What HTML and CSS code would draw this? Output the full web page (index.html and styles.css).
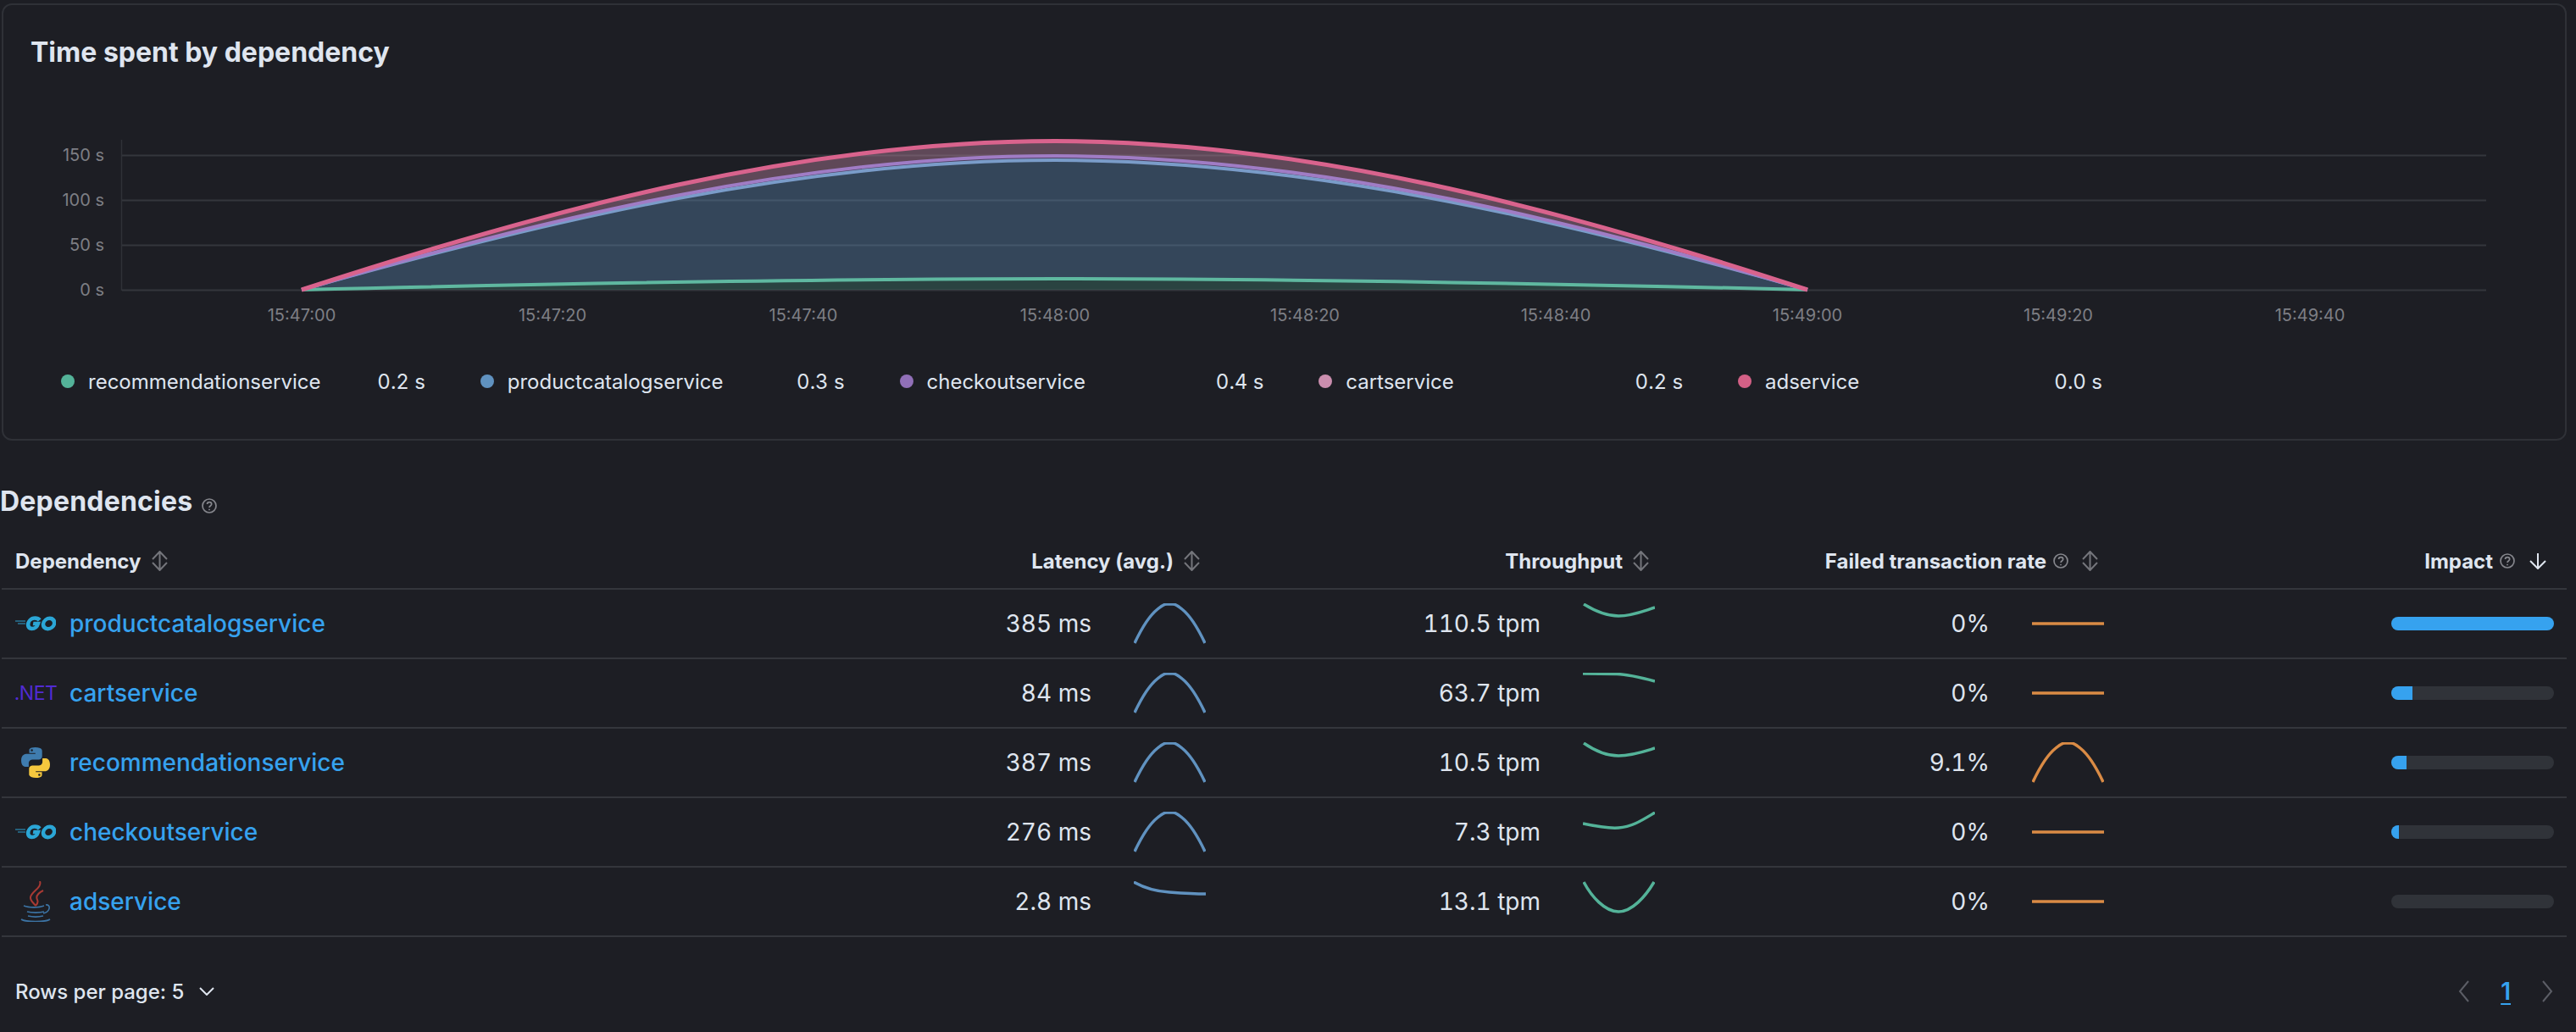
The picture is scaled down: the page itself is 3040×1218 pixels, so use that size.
FILE: index.html
```html
<!DOCTYPE html>
<html lang="en">
<head>
    <meta charset="UTF-8">
    <title>Dependencies</title>
    <link rel="stylesheet" href="styles.css">
</head>
<body>
    <svg class="defs" aria-hidden="true">
        <symbol id="sort" viewBox="0 0 19 24"><path d="M1 10 9.500 1 18 10M1 14l8.500 9 8.500-9M9.500 1v22"/></symbol>
        <symbol id="help" viewBox="0 0 18 18"><circle cx="9" cy="9" r="8"/><path d="M6.500 7c0-3.200 5.200-3.200 5.200 0 0 2-2.700 1.900-2.700 4"/><path d="M9 12.800v1.400"/></symbol>
        <symbol id="go" viewBox="0 0 48 18"><path class="go-thin" d="M0 6h12M3 9h9"/><g transform="translate(2.500 0) skewX(-9)"><path class="go-bold" d="M27 5C24 1.800 18 1.600 15.500 5c-2.700 3.700-1.200 10 4 10 3.500 0 6-2.300 6.500-6h-6"/><ellipse class="go-bold" cx="38.500" cy="9" rx="6.500" ry="6.200"/></g></symbol>
        <symbol id="arch" viewBox="0 0 85 48"><path d="M1 47C9 30 18 15 28 7 32 3.500 35 1 39 1h7C50 1 53 3.500 57 7 67 15 76 30 84 47"/></symbol>
    </svg>

    <div class="page">
        <section class="panel">
            <h3 class="panel-title">Time spent by dependency</h3>
            <svg class="chart" viewBox="4 150 3023 240" width="3023" height="240">
                <path class="axis" d="M143.500 165v178"/>
                <path class="grid" d="M144 183.500h2790M144 236.500h2790M144 289.500h2790M144 342.500h2790"/>
                <path class="band band-ad" d="M356 342C652.300 245.500 948.700 166.500 1245 166.500S1837.700 245.500 2133 342C1837.700 255.100 1541.300 184 1245 184S652.300 255.100 356 342Z"/>
                <path class="band band-checkout" d="M356 342C652.300 255.100 948.700 184 1245 184S1837.700 255.100 2133 342C1837.700 257.800 1541.300 189 1245 189S652.300 257.800 356 342Z"/>
                <path class="band band-product" d="M356 342C652.300 257.800 948.700 189 1245 189S1837.700 257.800 2133 342C1837.700 334.800 1541.300 329 1245 329S652.300 334.800 356 342Z"/>
                <path class="band band-rec" d="M356 342C652.300 334.800 948.700 329 1245 329S1837.700 334.800 2133 342Z"/>
                <path class="line line-rec" d="M356 342C652.300 334.800 948.700 329 1245 329S1837.700 334.800 2133 342"/>
                <path class="line line-product" d="M356 342C652.300 257.800 948.700 189 1245 189S1837.700 257.800 2133 342"/>
                <path class="line line-checkout" d="M356 342C652.300 255.100 948.700 184 1245 184S1837.700 255.100 2133 342"/>
                <path class="line line-ad" d="M356 342C652.300 245.500 948.700 166.500 1245 166.500S1837.700 245.500 2133 342"/>
                <g class="y-labels">
                    <text x="123" y="182.500">150 s</text>
                    <text x="123" y="235.500">100 s</text>
                    <text x="123" y="288.500">50 s</text>
                    <text x="123" y="341.500">0 s</text>
                </g>
                <g class="x-labels">
                    <text x="356" y="372">15:47:00</text>
                    <text x="652" y="372">15:47:20</text>
                    <text x="948" y="372">15:47:40</text>
                    <text x="1245" y="372">15:48:00</text>
                    <text x="1540" y="372">15:48:20</text>
                    <text x="1836" y="372">15:48:40</text>
                    <text x="2133" y="372">15:49:00</text>
                    <text x="2429" y="372">15:49:20</text>
                    <text x="2726" y="372">15:49:40</text>
                </g>
            </svg>
            <div class="legend">
                <div class="legend-item"><span class="dot dot-rec"></span><span class="legend-name">recommendationservice</span><span class="legend-value">0.2 s</span></div>
                <div class="legend-item"><span class="dot dot-product"></span><span class="legend-name">productcatalogservice</span><span class="legend-value">0.3 s</span></div>
                <div class="legend-item"><span class="dot dot-checkout"></span><span class="legend-name">checkoutservice</span><span class="legend-value">0.4 s</span></div>
                <div class="legend-item"><span class="dot dot-cart"></span><span class="legend-name">cartservice</span><span class="legend-value">0.2 s</span></div>
                <div class="legend-item"><span class="dot dot-ad"></span><span class="legend-name">adservice</span><span class="legend-value">0.0 s</span></div>
            </div>
        </section>

        <h3 class="section-title">Dependencies <svg class="icon-help"><use href="#help"/></svg></h3>

        <table class="deps">
            <colgroup><col><col class="col-num"><col class="col-num"><col class="col-num"><col class="col-num"></colgroup>
            <thead>
                <tr>
                    <th class="th-name"><div class="th-inner">Dependency <svg class="icon-sort"><use href="#sort"/></svg></div></th>
                    <th><div class="th-inner">Latency (avg.) <svg class="icon-sort"><use href="#sort"/></svg></div></th>
                    <th><div class="th-inner">Throughput <svg class="icon-sort"><use href="#sort"/></svg></div></th>
                    <th><div class="th-inner">Failed transaction rate <svg class="icon-help"><use href="#help"/></svg> <svg class="icon-sort"><use href="#sort"/></svg></div></th>
                    <th><div class="th-inner">Impact <svg class="icon-help"><use href="#help"/></svg> <svg class="icon-arrow" viewBox="0 0 22 20"><path d="M11 1v18M2 10l9 9 9-9"/></svg></div></th>
                </tr>
            </thead>
            <tbody>
                <tr>
                    <td><div class="name-cell"><span class="logo"><svg class="logo-go"><use href="#go"/></svg></span><a class="link">productcatalogservice</a></div></td>
                    <td><div class="num-cell">385 ms <svg class="spark spark-blue"><use href="#arch"/></svg></div></td>
                    <td><div class="num-cell">110.5 tpm <svg class="spark spark-green" viewBox="0 0 85 48"><path d="M1 1C14 9 28 15 42 15 58 15 72 9 85 5"/></svg></div></td>
                    <td><div class="num-cell">0% <svg class="spark spark-orange" viewBox="0 0 85 48"><path d="M0 24h85"/></svg></div></td>
                    <td><div class="impact"><div class="impact-fill fill-100"></div></div></td>
                </tr>
                <tr>
                    <td><div class="name-cell"><span class="logo logo-net">.NET</span><a class="link">cartservice</a></div></td>
                    <td><div class="num-cell">84 ms <svg class="spark spark-blue"><use href="#arch"/></svg></div></td>
                    <td><div class="num-cell">63.7 tpm <svg class="spark spark-green" viewBox="0 0 85 48"><path d="M0 1l40 .5C55 2 70 6 85 10"/></svg></div></td>
                    <td><div class="num-cell">0% <svg class="spark spark-orange" viewBox="0 0 85 48"><path d="M0 24h85"/></svg></div></td>
                    <td><div class="impact"><div class="impact-fill fill-2"></div></div></td>
                </tr>
                <tr>
                    <td><div class="name-cell"><span class="logo">
                        <svg class="logo-py" viewBox="0 0 36 36">
                            <path class="py-blue" d="M17.600 0C10 0 10.500 3.300 10.500 3.300v3.400h7.300v1H7.600S1 7.200 1 15.500 6.700 23 6.700 23h3.200v-3.900s-.1-4.500 4.400-4.500h7.200s4.200 0 4.200-4V4.200S26.200 0 17.600 0ZM13.600 2.200a1.300 1.300 0 1 1 0 2.600 1.300 1.300 0 0 1 0-2.600Z"/>
                            <path class="py-yellow" d="M18.400 36c7.600 0 7.100-3.300 7.100-3.300v-3.400h-7.300v-1h10.200S35 28.800 35 20.500 29.300 13 29.300 13h-3.200v3.900s.1 4.500-4.400 4.500h-7.200s-4.200 0-4.200 4v6.400S9.800 36 18.400 36ZM22.400 33.800a1.300 1.300 0 1 1 0-2.600 1.300 1.300 0 0 1 0 2.600Z"/>
                        </svg></span><a class="link">recommendationservice</a></div></td>
                    <td><div class="num-cell">387 ms <svg class="spark spark-blue"><use href="#arch"/></svg></div></td>
                    <td><div class="num-cell">10.5 tpm <svg class="spark spark-green" viewBox="0 0 85 48"><path d="M1 1C14 10 28 16 42 16 58 16 72 11 85 7"/></svg></div></td>
                    <td><div class="num-cell">9.1% <svg class="spark spark-orange"><use href="#arch"/></svg></div></td>
                    <td><div class="impact"><div class="impact-fill fill-3"></div></div></td>
                </tr>
                <tr>
                    <td><div class="name-cell"><span class="logo"><svg class="logo-go"><use href="#go"/></svg></span><a class="link">checkoutservice</a></div></td>
                    <td><div class="num-cell">276 ms <svg class="spark spark-blue"><use href="#arch"/></svg></div></td>
                    <td><div class="num-cell">7.3 tpm <svg class="spark spark-green" viewBox="0 0 85 48"><path d="M0 14C14 17 28 20 42 19 58 18 70 10 85 1"/></svg></div></td>
                    <td><div class="num-cell">0% <svg class="spark spark-orange" viewBox="0 0 85 48"><path d="M0 24h85"/></svg></div></td>
                    <td><div class="impact"><div class="impact-fill fill-4"></div></div></td>
                </tr>
                <tr>
                    <td><div class="name-cell"><span class="logo">
                        <svg class="logo-java" viewBox="0 0 36 48">
                            <path class="java-flame" d="M23 0C26 8 13 12 12 19c-.5 4 4 7 6 10M27 11c-6 3-9 7-7 11 1 2 0 5-2 7"/>
                            <path class="java-cup" d="M4 29c6 2.500 18 2.500 24 0M8 36c5 1.500 15 1.500 20 0M9 41c5 1.200 13 1.200 18 0M1 45c5 3.500 29 3.500 34 0M30 28c6-1 6 8-3 10"/>
                        </svg></span><a class="link">adservice</a></div></td>
                    <td><div class="num-cell">2.8 ms <svg class="spark spark-blue" viewBox="0 0 85 48"><path d="M0 1C14 9 26 12 42 13 56 14 70 15 85 15"/></svg></div></td>
                    <td><div class="num-cell">13.1 tpm <svg class="spark spark-green" viewBox="0 0 85 48"><path d="M1 1C10 18 26 36 42 36 58 36 74 18 84 1"/></svg></div></td>
                    <td><div class="num-cell">0% <svg class="spark spark-orange" viewBox="0 0 85 48"><path d="M0 24h85"/></svg></div></td>
                    <td><div class="impact"></div></td>
                </tr>
            </tbody>
        </table>

        <div class="pager">
            <div class="rows-per-page">Rows per page: 5 <svg class="icon-chevron" viewBox="0 0 18 10"><path d="M1 1l8 8 8-8"/></svg></div>
            <div class="pages">
                <svg class="icon-page" viewBox="0 0 13 26"><path d="M12 1 2 13l10 12"/></svg>
                <a class="page-num">1</a>
                <svg class="icon-page" viewBox="0 0 13 26"><path d="M1 1l10 12L1 25"/></svg>
            </div>
        </div>
    </div>
</body>
</html>
```

FILE: styles.css
```css
html, body {
    margin: 0;
    background-color: #1d1e24;
}

body {
    font-family: 'Inter', 'Liberation Sans', sans-serif;
    color: #dfe5ef;
    overflow: hidden;
}

.defs {
    position: absolute;
    width: 0;
    height: 0;
}

.page {
    padding: 4px 11px 0 0;
}

/* chart panel */
.panel {
    margin-left: 2px;
    padding-bottom: 48px;
    border: 2px solid #2f3137;
    border-radius: 12px;
}

.panel-title {
    margin: 36px 0 0 32px;
    font-size: 32px;
    line-height: 40px;
    font-weight: 700;
}

.chart {
    display: block;
    margin-top: 68px;
}

.axis {
    fill: none;
    stroke: #2f3137;
    stroke-width: 1.5;
}

.grid {
    fill: none;
    stroke: #34363c;
    stroke-width: 2;
}

.y-labels text,
.x-labels text {
    font-size: 20px;
    fill: #7d7e84;
    dominant-baseline: central;
}

.y-labels text { text-anchor: end; }
.x-labels text { text-anchor: middle; }

.band-ad { fill: rgba(202, 142, 174, 0.38); }
.band-checkout { fill: rgba(145, 112, 184, 0.4); }
.band-product { fill: rgba(96, 146, 192, 0.35); }
.band-rec { fill: rgba(84, 179, 153, 0.25); }

.line {
    fill: none;
    stroke-width: 4;
}

.line-rec { stroke: #5fb8a0; }
.line-product { stroke: #7a9cc9; }
.line-checkout { stroke: #a07cc5; }
.line-ad {
    stroke: #d9638d;
    stroke-width: 5;
}

.legend {
    display: flex;
    gap: 64.75px;
    margin-top: 40px;
    padding-left: 68px;
    height: 40px;
    align-items: center;
    font-size: 24px;
}

.legend-item {
    display: flex;
    align-items: center;
    width: 430px;
}

.legend-name {
    flex: 1;
}

.legend-value {
    font-feature-settings: "tnum";
}

.dot {
    width: 16px;
    height: 16px;
    border-radius: 50%;
    margin-right: 16px;
}

.dot-rec { background-color: #54b399; }
.dot-product { background-color: #6092c0; }
.dot-checkout { background-color: #9170b8; }
.dot-cart { background-color: #ca8eae; }
.dot-ad { background-color: #d36086; }

/* table */
.section-title {
    margin: 52px 0 0 0;
    font-size: 32px;
    line-height: 40px;
    font-weight: 700;
    letter-spacing: 0.2px;
}

.icon-help {
    width: 18px;
    height: 18px;
    fill: none;
    stroke: #85868c;
    stroke-width: 1.7;
    flex: none;
}

.section-title .icon-help {
    margin-left: 3px;
    vertical-align: -3px;
}

.th-inner .icon-help {
    margin: 0 4px 0 -4px;
}

.icon-sort {
    width: 19px;
    height: 24px;
    fill: none;
    stroke: #74757b;
    stroke-width: 2;
    flex: none;
}

.icon-arrow {
    width: 22px;
    height: 20px;
    fill: none;
    stroke: #dfe5ef;
    stroke-width: 2;
    flex: none;
}

.deps {
    margin: 18px 0 0 2px;
    width: 3027px;
    table-layout: fixed;
    border-collapse: collapse;
}

.col-num {
    width: 530px;
}

.deps th,
.deps td {
    padding: 0;
    border-bottom: 2px solid #34363c;
}

.deps th {
    height: 64px;
    font-size: 24px;
    font-weight: 700;
}

.deps td {
    height: 80px;
    font-size: 28px;
}

.th-inner {
    display: flex;
    align-items: center;
    justify-content: flex-end;
    gap: 12px;
    padding-right: 23px;
}

.th-name .th-inner {
    justify-content: flex-start;
    padding: 0 0 0 16px;
}

.name-cell {
    display: flex;
    align-items: center;
    gap: 16px;
    padding-left: 16px;
}

.logo {
    display: flex;
    align-items: center;
    justify-content: center;
    width: 48px;
    height: 48px;
    flex: none;
}

.logo-net {
    color: #512bd4;
    font-size: 23px;
    letter-spacing: -0.5px;
}

.logo-go {
    width: 48px;
    height: 18px;
    fill: none;
}

.go-thin {
    stroke: #2f9fd0;
    stroke-width: 1.2;
}

.go-bold {
    fill: none;
    stroke: #2ba6d6;
    stroke-width: 4.5;
}

.logo-py {
    width: 36px;
    height: 36px;
}

.py-blue { fill: #3f7cae; fill-rule: evenodd; }
.py-yellow { fill: #f6c83e; fill-rule: evenodd; }

.logo-java {
    width: 36px;
    height: 48px;
    fill: none;
}

.java-flame {
    stroke: #a83a34;
    stroke-width: 2;
}

.java-cup {
    stroke: #3c74a5;
    stroke-width: 1.6;
}

.link {
    color: #36a2ef;
    font-weight: 500;
}

.num-cell {
    display: flex;
    align-items: center;
    justify-content: flex-end;
    gap: 50px;
    padding-right: 16px;
    font-feature-settings: "tnum";
}

.spark {
    width: 85px;
    height: 48px;
    fill: none;
    stroke-width: 3.5;
    flex: none;
}

.spark-blue { stroke: #6092c0; }
.spark-green { stroke: #54b399; }
.spark-orange { stroke: #da8b45; }

.impact {
    width: 192px;
    height: 16px;
    margin-left: auto;
    margin-right: 15px;
    border-radius: 8px;
    background-color: #303339;
    overflow: hidden;
}

.impact-fill {
    height: 100%;
    background-color: #36a2ef;
}

.fill-100 { width: 100%; }
.fill-2 { width: 25px; }
.fill-3 { width: 18px; }
.fill-4 { width: 9px; }

/* pagination */
.pager {
    display: flex;
    align-items: center;
    justify-content: space-between;
    height: 60px;
    margin: 34px 0 0 18px;
}

.rows-per-page {
    display: flex;
    align-items: center;
    gap: 18px;
    font-size: 24px;
    font-weight: 500;
}

.rows-per-page .icon-chevron {
    width: 18px;
    height: 10px;
    fill: none;
    stroke: #dfe5ef;
    stroke-width: 2;
}

.pages {
    display: flex;
    align-items: center;
    gap: 37px;
    margin-right: 16px;
}

.icon-page {
    width: 13px;
    height: 26px;
    fill: none;
    stroke: #5c5e66;
    stroke-width: 2;
}

.page-num {
    color: #36a2ef;
    font-size: 28px;
    font-weight: 600;
    text-decoration: underline;
    text-underline-offset: 4px;
}
```
